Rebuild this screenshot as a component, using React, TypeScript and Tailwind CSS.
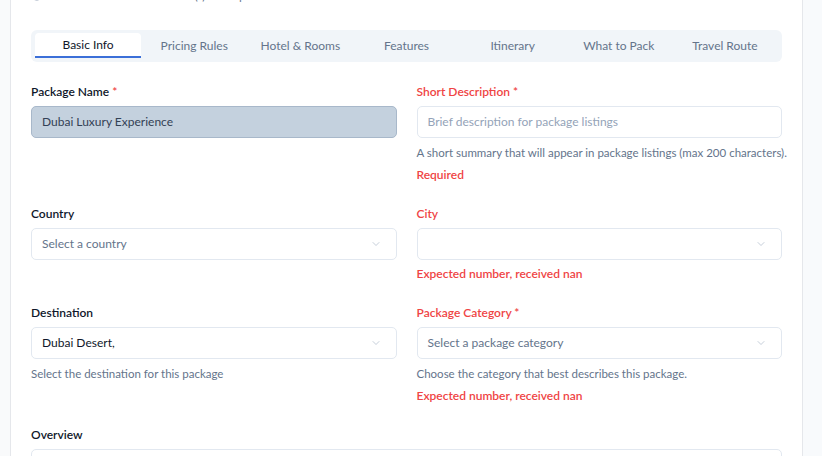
import { ChevronDown, Info } from 'lucide-react'

const tabs = [
    'Basic Info',
    'Pricing Rules',
    'Hotel & Rooms',
    'Features',
    'Itinerary',
    'What to Pack',
    'Travel Route',
]

function Label({ text, star, error }: { text: string; star?: boolean; error?: boolean }) {
    return (
        <div
            className={`h-4 text-[12px] leading-4 font-semibold ${
                error ? 'text-[#ef4444]' : 'text-[#0f172a]'
            }`}
        >
            {text}
            {star && <span className="text-[#ef4444]"> *</span>}
        </div>
    )
}

function Select({ value, placeholder }: { value?: string; placeholder?: string }) {
    return (
        <div className="mt-[6px] flex h-8 items-center justify-between rounded-[5px] border border-[#e2e8f0] bg-white pl-[10px] pr-[14px] text-[12px]">
            {value ? (
                <span className="text-[#0f172a]">{value}</span>
            ) : (
                <span className="text-[#64748b]">{placeholder}</span>
            )}
            <ChevronDown size={12} className="text-[#94a3b8] opacity-70" strokeWidth={1.5} />
        </div>
    )
}

function Helper({ text }: { text: string }) {
    return (
        <div className="mt-[7px] h-4 whitespace-nowrap text-[11.5px] leading-4 text-[#64748b]">
            {text}
        </div>
    )
}

function Err({ text }: { text: string }) {
    return (
        <div className="mt-[6px] h-4 whitespace-nowrap text-[12px] leading-4 font-semibold text-[#ef4444]">
            {text}
        </div>
    )
}

export default function App() {
    return (
        <div
            className="flex h-[456px] w-[822px] overflow-hidden bg-[#f8fafc]"
            style={{ fontFamily: 'Lato, "Noto Sans", sans-serif' }}
        >
            <div className="w-[11px] shrink-0 border-r border-[#e5e7eb] bg-[#f9fafb]" />
            <div className="flex w-[792px] shrink-0 flex-col border-r border-[#e5e7eb] bg-white px-5">
                <div className="-mt-[12px] flex h-4 items-center gap-[6px] text-[11px] text-[#64748b]">
                    <Info size={9} className="ml-[1px] text-[#94a3b8]" />
                    <span>Fields marked with an asterisk (*) are required</span>
                </div>

                <div className="mt-[26px] grid h-8 grid-cols-7 rounded-[6px] bg-[#f1f5f9] px-1 pt-[3px] pb-1">
                    {tabs.map((t, i) => (
                        <div
                            key={t}
                            className={`flex h-[25px] items-center justify-center text-[12px] ${
                                i === 0
                                    ? 'rounded-t-[4px] border-b-2 border-[#3b6fd8] bg-white text-[#0f172a]'
                                    : 'text-[#64748b]'
                            }`}
                        >
                            {t}
                        </div>
                    ))}
                </div>

                <div className="mt-[22px] grid grid-cols-2 gap-x-5">
                    <div>
                        <Label text="Package Name" star />
                        <div className="mt-[6px] flex h-8 items-center rounded-[5px] border border-[#a8b8ca] bg-[#c4d1de] px-[10px] text-[12px] text-[#334155]">
                            Dubai Luxury Experience
                        </div>
                    </div>
                    <div>
                        <Label text="Short Description" star error />
                        <div className="mt-[6px] flex h-8 items-center rounded-[5px] border border-[#e2e8f0] bg-white px-[10px] text-[12px] text-[#94a3b8]">
                            Brief description for package listings
                        </div>
                        <Helper text="A short summary that will appear in package listings (max 200 characters)." />
                        <Err text="Required" />
                    </div>

                    <div className="mt-[23px]">
                        <Label text="Country" />
                        <Select placeholder="Select a country" />
                    </div>
                    <div className="mt-[23px]">
                        <Label text="City" error />
                        <Select />
                        <Err text="Expected number, received nan" />
                    </div>

                    <div className="mt-[23px]">
                        <Label text="Destination" />
                        <Select value="Dubai Desert," />
                        <Helper text="Select the destination for this package" />
                    </div>
                    <div className="mt-[23px]">
                        <Label text="Package Category" star error />
                        <Select placeholder="Select a package category" />
                        <Helper text="Choose the category that best describes this package." />
                        <Err text="Expected number, received nan" />
                    </div>
                </div>

                <div className="mt-[23px]">
                    <Label text="Overview" />
                    <div className="mt-[6px] h-20 rounded-[5px] border border-[#e2e8f0] bg-white" />
                </div>
            </div>
            <div className="flex-1 bg-[#f8fafc]" />
        </div>
    )
}
